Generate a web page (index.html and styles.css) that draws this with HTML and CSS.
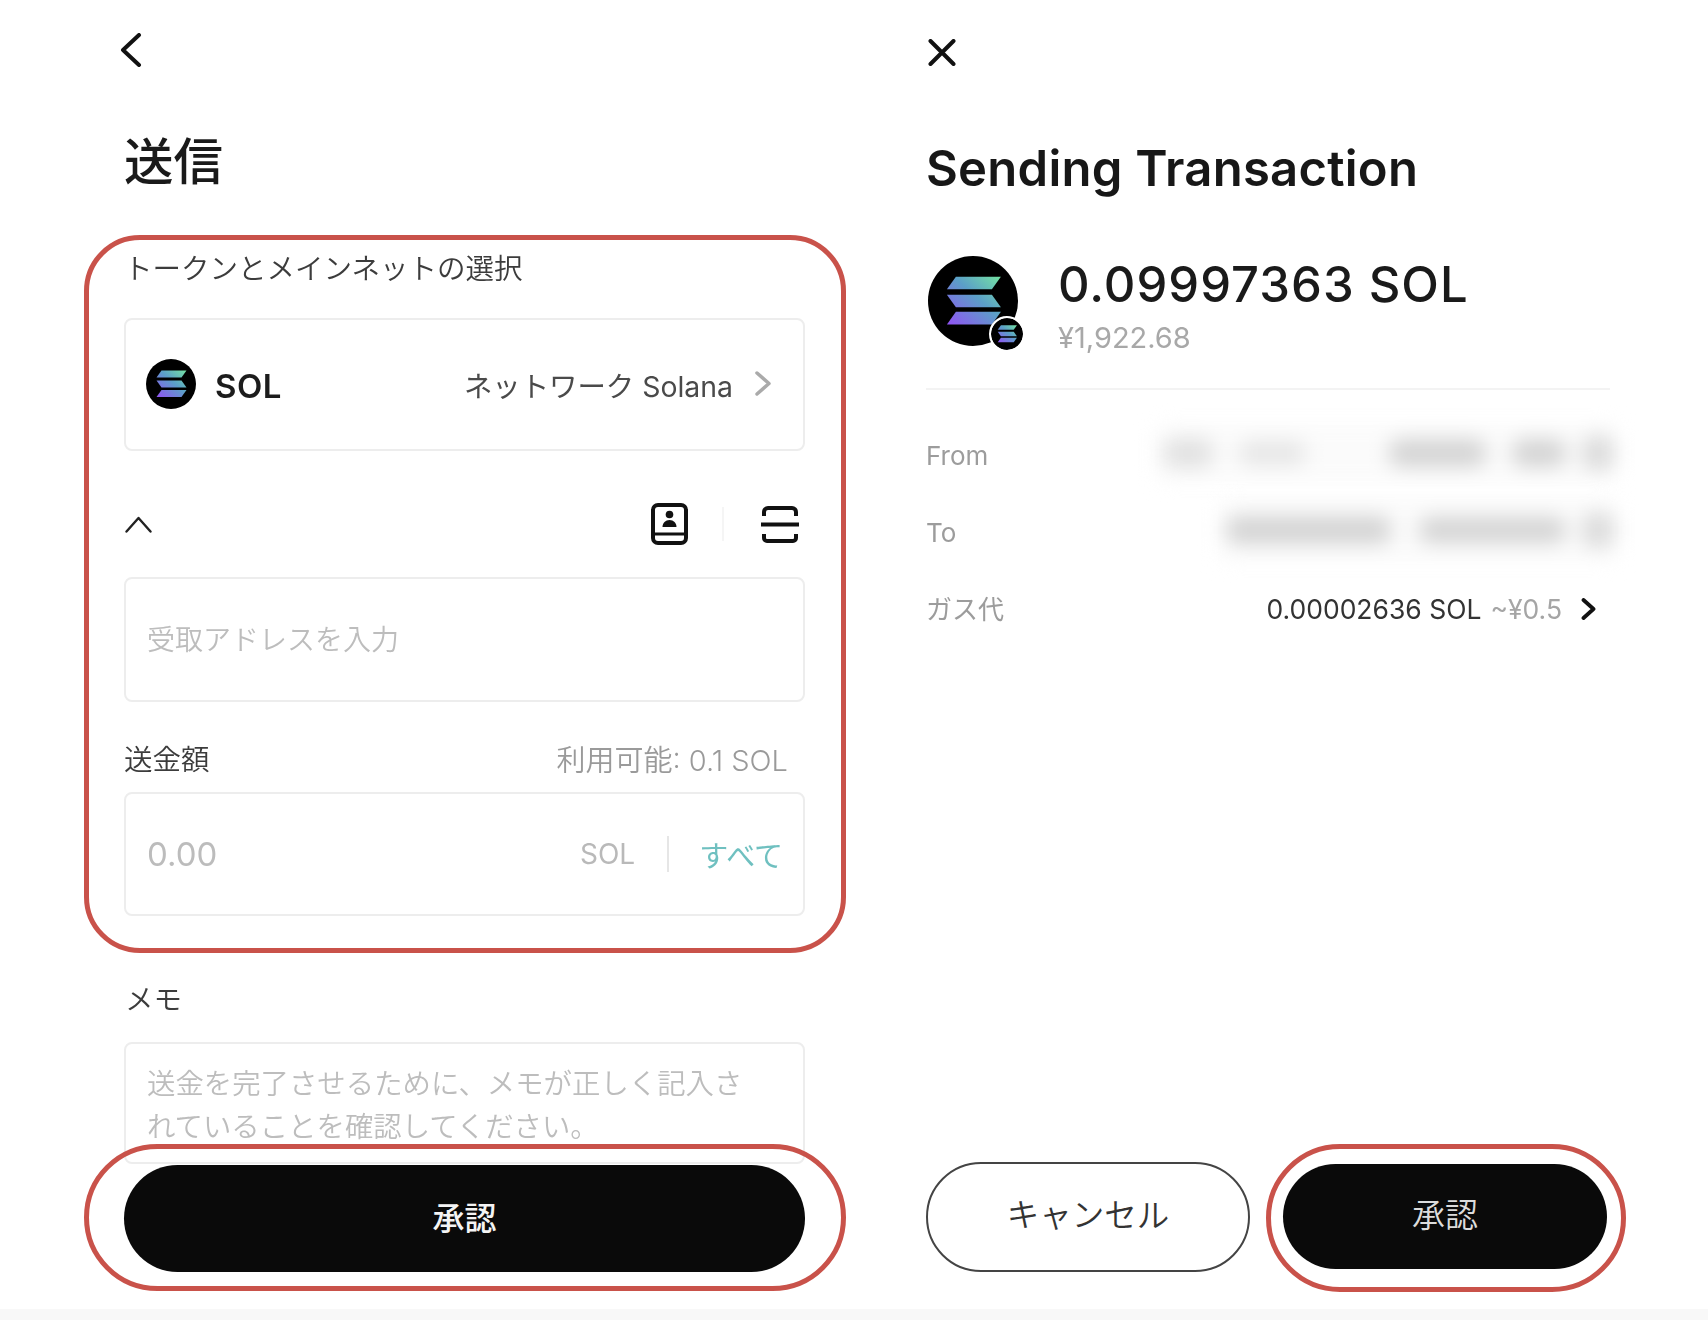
FILE: index.html
```html
<!DOCTYPE html>
<html lang="ja">
<head>
<meta charset="utf-8">
<title>送信 / Sending Transaction</title>
<link rel="stylesheet" href="styles.css">
</head>
<body>
<svg class="defs" width="0" height="0" aria-hidden="true">
  <defs>
    <linearGradient id="solgrad" gradientUnits="userSpaceOnUse" x1="78" y1="20" x2="26" y2="78">
      <stop offset="0" stop-color="#74e3a2"/>
      <stop offset="0.45" stop-color="#5b9fc8"/>
      <stop offset="1" stop-color="#8f55f2"/>
    </linearGradient>
    <symbol id="sol" viewBox="0 0 100 100">
      <circle cx="50" cy="50" r="50" fill="#000"/>
      <path fill="url(#solgrad)" d="M31 23H81L71 37H21z"/>
      <path fill="url(#solgrad)" d="M21 43H71L81 57H31z"/>
      <path fill="url(#solgrad)" d="M31 62H81L71 76H21z"/>
    </symbol>
  </defs>
</svg>
<div class="page">
  <div class="panels">
    <section class="panel panel-left">
      <svg class="icon-back" width="22" height="34" viewBox="0 0 22 34"><path d="M19 2L3 17l16 15" fill="none" stroke="#111" stroke-width="4" stroke-linecap="round" stroke-linejoin="round"/></svg>
      <h1 class="title-jp">送信</h1>
      <div class="ring ring-form">
        <div class="label label-token">トークンとメインネットの選択</div>
        <div class="box box-token">
          <svg class="token-icon"><use href="#sol"/></svg>
          <span class="token-name">SOL</span>
          <span class="network">ネットワーク Solana</span>
          <svg class="icon-next" width="16" height="25" viewBox="0 0 16 25"><path d="M2 2l12 10.500L2 23" fill="none" stroke="#aaa" stroke-width="3.500" stroke-linecap="round" stroke-linejoin="round"/></svg>
        </div>
        <div class="tools">
          <svg class="icon-up" width="27" height="17" viewBox="0 0 27 17"><path d="M1.500 15.500L13.500 2l12 13.500" fill="none" stroke="#222" stroke-width="2.400" stroke-linecap="round" stroke-linejoin="round"/></svg>
          <svg class="icon-book" width="37" height="42" viewBox="0 0 37 42">
            <rect x="2" y="2" width="33" height="38" rx="5" fill="none" stroke="#111" stroke-width="4"/>
            <path d="M2 31H35" stroke="#111" stroke-width="3.200"/>
            <circle cx="18.500" cy="11.500" r="3.800" fill="#111"/>
            <path d="M11.500 24c0-4 3-7 7-7s7 3 7 7z" fill="#111"/>
          </svg>
          <span class="tool-sep"></span>
          <svg class="icon-scan" width="38" height="37" viewBox="0 0 38 37">
            <path d="M3 10V6a4 4 0 0 1 4-4H31a4 4 0 0 1 4 4V10M3 28v4a3 3 0 0 0 3 3H32a3 3 0 0 0 3-3V28" fill="none" stroke="#111" stroke-width="4"/>
            <path d="M0 18.500H38" stroke="#111" stroke-width="4"/>
          </svg>
        </div>
        <div class="box box-address"><span class="placeholder address-text">受取アドレスを入力</span></div>
        <div class="amount-head">
          <span class="label amount-label">送金額</span>
          <span class="available">利用可能: 0.1 SOL</span>
        </div>
        <div class="box box-amount">
          <span class="amount-zero">0.00</span>
          <span class="amount-unit">SOL</span>
          <span class="amount-sep"></span>
          <span class="amount-all">すべて</span>
        </div>
      </div>
      <div class="label label-memo">メモ</div>
      <div class="box box-memo"><p class="placeholder memo-text">送金を完了させるために、メモが正しく記入さ<br>れていることを確認してください。</p></div>
      <div class="ring ring-approve">
        <button class="btn-black btn-wide">承認</button>
      </div>
    </section>

    <section class="panel panel-right">
      <svg class="icon-close" width="28" height="27" viewBox="0 0 28 27"><path d="M2.500 2L25.500 25M25.500 2L2.500 25" fill="none" stroke="#111" stroke-width="4" stroke-linecap="round"/></svg>
      <h1 class="title-en">Sending Transaction</h1>
      <div class="summary">
        <div class="summary-icon">
          <svg class="summary-main"><use href="#sol"/></svg>
          <svg class="summary-badge"><use href="#sol"/></svg>
        </div>
        <div class="summary-text">
          <div class="summary-amount">0.09997363 SOL</div>
          <div class="summary-price">¥1,922.68</div>
        </div>
      </div>
      <div class="rule"></div>
      <div class="rows">
        <div class="row">
          <span class="row-name">From</span>
          <div class="smudge">
            <i class="blob b-a"></i><i class="blob b-b"></i><i class="blob b-c"></i><i class="blob b-d"></i><i class="blob b-e"></i>
          </div>
        </div>
        <div class="row">
          <span class="row-name">To</span>
          <div class="smudge smudge-to">
            <i class="blob b-f"></i><i class="blob b-g"></i><i class="blob b-e"></i>
          </div>
        </div>
        <div class="row row-gas">
          <span class="row-name">ガス代</span>
          <div class="gas">
            <span class="gas-value">0.00002636 SOL</span>
            <span class="gas-fiat">~¥0.5</span>
            <svg class="icon-gas" width="15" height="22" viewBox="0 0 15 22"><path d="M2.500 2L12.500 11l-10 9" fill="none" stroke="#111" stroke-width="3.800" stroke-linecap="round" stroke-linejoin="round"/></svg>
          </div>
        </div>
      </div>
      <div class="actions">
        <button class="btn-outline">キャンセル</button>
        <div class="ring ring-confirm">
          <button class="btn-black btn-half">承認</button>
        </div>
      </div>
    </section>
  </div>
  <div class="strip"></div>
</div>
</body>
</html>
```
FILE: styles.css
```css
* { box-sizing: border-box; }
html, body { margin: 0; padding: 0; background: #fff; }
body {
  width: 1708px;
  height: 1320px;
  overflow: hidden;
  font-family: Inter, "Noto Sans CJK JP", sans-serif;
  color: #222;
}
.defs { position: absolute; }
.page {
  height: 1320px;
  display: flex;
  flex-direction: column;
  filter: blur(0.55px);
}
.panels { flex: 1; display: flex; min-height: 0; }
.strip { height: 11px; background: #f8f8f8; }

.panel { display: flex; flex-direction: column; }
.panel-left { width: 681px; margin-left: 124px; padding-top: 33px; }
.panel-right { width: 684px; margin-left: 121px; padding-top: 39px; }

.icon-back { display: block; margin-left: -4px; flex: none; }
.title-jp {
  margin: 67px 0 0;
  height: 56px;
  font-size: 49.5px;
  line-height: 56px;
  font-weight: 500;
  color: #1a1a1a;
}

.ring {
  border: 5px solid #c9524a;
  position: relative;
}
.ring-form {
  margin: 45px -41px 0 -40px;
  padding: 9px 36px 32px 35px;
  border-radius: 56px;
}
.label {
  font-size: 28.5px;
  line-height: 40px;
  font-weight: 350;
  color: #3c3c3c;
  white-space: nowrap;
}
.box {
  border: 2px solid #ededed;
  border-radius: 8px;
  display: flex;
  align-items: center;
  background: #fff;
}
.box-token { margin-top: 29px; height: 133px; padding: 0 32px 0 20px; }
.token-icon { width: 50px; height: 50px; margin-top: -2px; flex: none; }
.token-name {
  margin-left: 19px;
  margin-top: 2px;
  font-size: 33px;
  letter-spacing: 0.5px;
  font-weight: 600;
  color: #1c1c1c;
}
.network {
  margin-left: auto;
  font-size: 28.4px;
  font-weight: 400;
  color: #4a4a4a;
}
.icon-next { margin-left: 22px; margin-top: -3px; flex: none; }

.tools {
  margin-top: 52px;
  height: 42px;
  display: flex;
  align-items: center;
}
.icon-up { flex: none; margin-left: 1px; }
.icon-book { margin-left: auto; flex: none; }
.tool-sep { width: 2px; height: 34px; margin: 0 37px 0 34px; background: #f5f5f5; }
.icon-scan { margin-right: 6px; flex: none; }

.box-address { margin-top: 32px; height: 125px; padding-left: 21px; }
.placeholder { color: #bdbdbd; font-size: 28.4px; font-weight: 350; }
.address-text { margin-top: -4px; font-size: 28px; }

.amount-head {
  margin-top: 36px;
  height: 40px;
  display: flex;
  justify-content: space-between;
  align-items: center;
  padding-right: 17px;
}
.amount-label { margin-top: 3px; }
.available { font-size: 29px; color: #9a9a9a; font-weight: 350; }

.box-amount { margin-top: 14px; height: 124px; padding: 0 20px 0 21px; }
.amount-zero { font-size: 33px; color: #bcbcbc; }
.amount-unit { margin-left: auto; font-size: 28px; color: #b9b9b9; }
.amount-sep { width: 2px; height: 36px; margin: 0 30px 0 32px; background: #e6e6e6; }
.amount-all { font-size: 29px; color: #6fc0c0; }

.label-memo { margin-top: 27px; padding-left: 1px; }
.box-memo {
  margin-top: 22px;
  height: 122px;
  padding: 0 21px;
  align-items: flex-start;
  overflow: hidden;
}
.memo-text { margin: 18px 0 0; line-height: 43px; white-space: nowrap; }

.ring-approve {
  margin: -20px -41px 0 -40px;
  padding: 16px 36px 14px 35px;
  border-radius: 74px;
}
.btn-black {
  display: block;
  border: 0;
  background: #0a0a0a;
  font-family: inherit;
  padding: 0;
}
.btn-wide {
  width: 100%;
  height: 107px;
  border-radius: 54px;
  color: #f4f4f4;
  font-size: 32px;
  font-weight: 500;
  padding-bottom: 6px;
}

.icon-close { display: block; margin-left: 2px; flex: none; }
.title-en {
  margin: 74px 0 0;
  font-size: 49px;
  letter-spacing: 0.25px;
  line-height: 58px;
  font-weight: 600;
  color: #171717;
}
.summary { margin-top: 58px; display: flex; align-items: flex-start; }
.summary-icon { position: relative; width: 92px; height: 96px; padding-left: 2px; flex: none; }
.summary-main { display: block; width: 90px; height: 90px; }
.summary-badge {
  position: absolute;
  left: 63px;
  top: 60px;
  width: 36px;
  height: 36px;
  background: #fff;
  border: 2px solid #fff;
  border-radius: 50%;
}
.summary-text { margin-left: 40px; }
.summary-amount {
  font-size: 49px;
  letter-spacing: 1px;
  line-height: 58px;
  font-weight: 500;
  color: #1a1a1a;
  white-space: nowrap;
}
.summary-price {
  margin-top: 7px;
  font-size: 29px;
  line-height: 34px;
  color: #a8a8a8;
}
.rule { margin-top: 33px; height: 2px; background: #f3f3f3; flex: none; }
.rows { margin-top: 45px; display: flex; flex-direction: column; gap: 37px; }
.row {
  height: 40px;
  display: flex;
  justify-content: space-between;
  align-items: center;
}
.row-name { font-size: 26px; color: #9c9c9c; font-weight: 400; }
.smudge {
  display: flex;
  align-items: center;
  flex: none;
  height: 56px;
  margin: -4px -8px 0 0;
  padding: 0 4px 0 8px;
  background: #fbfbfb;
  border-radius: 12px;
  filter: blur(10px);
}
.smudge-to { height: 62px; }
.blob { display: block; background: #d4d4d4; border-radius: 12px; flex: none; }
.b-a { width: 50px; height: 30px; background: #e2e2e2; margin-right: 26px; }
.b-b { width: 67px; height: 24px; background: #e6e6e6; margin-right: 83px; }
.b-c { width: 97px; height: 28px; margin-right: 26px; }
.b-d { width: 54px; height: 28px; margin-right: 16px; }
.b-e { width: 32px; height: 36px; background: #dcdcdc; }
.b-f { width: 165px; height: 28px; margin-right: 28px; }
.b-g { width: 147px; height: 26px; margin-right: 16px; }

.row-gas { margin-top: -2px; }
.gas { display: flex; align-items: center; margin: 4px 14px 0 0; }
.gas-value { font-size: 26.5px; color: #333; }
.gas-fiat { margin-left: 9px; font-size: 26.5px; color: #a5a5a5; }
.icon-gas { margin-left: 19px; flex: none; }

.actions {
  margin-top: auto;
  padding-bottom: 17px;
  display: flex;
  align-items: center;
  gap: 16px;
}
.btn-outline {
  width: 324px;
  height: 110px;
  flex: none;
  margin-top: -2px;
  border: 2px solid #444;
  border-radius: 55px;
  background: #fff;
  color: #333;
  font-family: inherit;
  font-size: 32.5px;
  font-weight: 350;
  padding: 0 0 10px;
}
.ring-confirm {
  width: 360px;
  height: 148px;
  padding: 15px 14px 18px 12px;
  border-radius: 74px;
  flex: none;
}
.btn-half {
  width: 324px;
  height: 105px;
  border-radius: 53px;
  color: #dcdcdc;
  font-size: 33px;
  font-weight: 350;
  padding-bottom: 8px;
}
```
